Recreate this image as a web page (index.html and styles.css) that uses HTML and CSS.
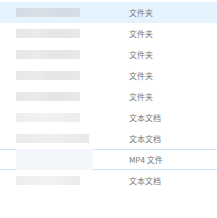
FILE: index.html
```html
<!DOCTYPE html>
<html>
<head>
<meta charset="utf-8">
<link rel="stylesheet" href="styles.css">
</head>
<body>
<div class="list">
  <div class="row selected"><div class="name"><span class="blur b-sel"></span></div><div class="type">文件夹</div></div>
  <div class="row"><div class="name"><span class="blur"></span></div><div class="type">文件夹</div></div>
  <div class="row"><div class="name"><span class="blur"></span></div><div class="type">文件夹</div></div>
  <div class="row"><div class="name"><span class="blur"></span></div><div class="type">文件夹</div></div>
  <div class="row"><div class="name"><span class="blur"></span></div><div class="type">文件夹</div></div>
  <div class="row"><div class="name"><span class="blur light"></span></div><div class="type">文本文档</div></div>
  <div class="row"><div class="name"><span class="blur wide"></span></div><div class="type">文本文档</div></div>
  <div class="row hover"><div class="name"><span class="blur wider pale"></span></div><div class="type">MP4 文件</div></div>
  <div class="row"><div class="name"><span class="blur light"></span></div><div class="type">文本文档</div></div>
</div>
</body>
</html>
```
FILE: styles.css
```css
html, body {
  margin: 0;
  padding: 0;
  background: #ffffff;
}
body {
  font-family: "Noto Sans CJK SC", "Liberation Sans", sans-serif;
  font-size: 8px;
  color: #777777;
}
.list {
  padding-top: 2px;
  display: flex;
  flex-direction: column;
}
.row {
  height: 21px;
  box-sizing: border-box;
  display: flex;
  align-items: center;
}
.row.selected {
  background: #e5f3ff;
}
.row.hover {
  border-top: 1px solid #cce4f7;
  border-bottom: 1px solid #cce4f7;
}
.name {
  width: 129px;
  padding-left: 16px;
  box-sizing: border-box;
  display: flex;
  align-items: center;
}
.blur {
  display: block;
  width: 64px;
  height: 9px;
  background: linear-gradient(90deg, #e6e6e6 0%, #ebebeb 30%, #e4e4e4 60%, #e9e9e9 100%);
}
.blur.b-sel {
  background: linear-gradient(90deg, #d3dbe4 0%, #d8e0e8 40%, #d2dae3 70%, #d6dee6 100%);
}
.blur.light {
  background: linear-gradient(90deg, #eeeeee 0%, #f2f2f2 50%, #ececec 100%);
}
.blur.wide {
  width: 73px;
  background: linear-gradient(90deg, #eaeaea 0%, #efefef 50%, #e8e8e8 100%);
}
.blur.wider {
  width: 77px;
  height: 21px;
}
.blur.pale {
  background: #f3f7fb;
}
.type {
  line-height: 1;
  white-space: nowrap;
}
```
